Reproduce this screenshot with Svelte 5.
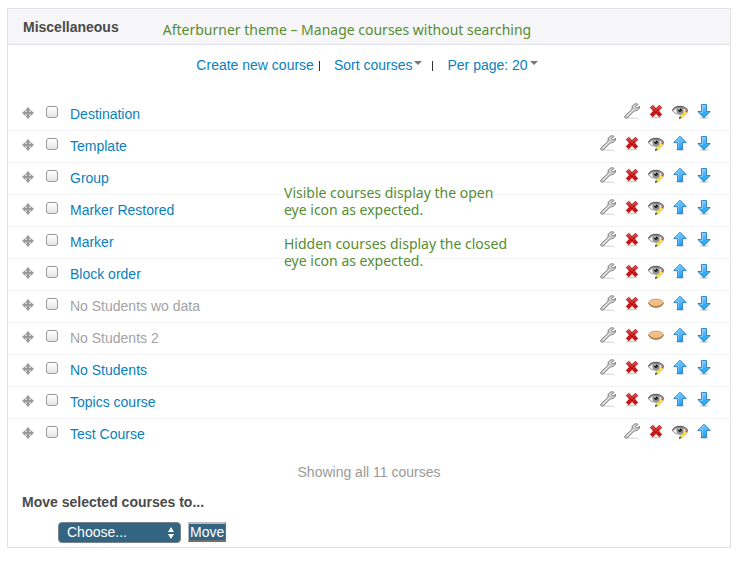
<script>
  const courses = [
    { name: 'Destination', visible: true },
    { name: 'Template', visible: true },
    { name: 'Group', visible: true },
    { name: 'Marker Restored', visible: true },
    { name: 'Marker', visible: true },
    { name: 'Block order', visible: true },
    { name: 'No Students wo data', visible: false },
    { name: 'No Students 2', visible: false },
    { name: 'No Students', visible: true },
    { name: 'Topics course', visible: true },
    { name: 'Test Course', visible: true }
  ];
</script>

<svg class="defs" aria-hidden="true">
  <defs>
    <linearGradient id="blue" x1="0" y1="0" x2="0" y2="1">
      <stop offset="0" stop-color="#7cc8f8" />
      <stop offset="1" stop-color="#18a0fa" />
    </linearGradient>
    <linearGradient id="red" x1="0" y1="0" x2="0" y2="1">
      <stop offset="0" stop-color="#e86058" />
      <stop offset="0.5" stop-color="#c81818" />
      <stop offset="1" stop-color="#d01010" />
    </linearGradient>
    <linearGradient id="skin" x1="0" y1="0" x2="0" y2="1">
      <stop offset="0" stop-color="#efc592" />
      <stop offset="1" stop-color="#f3b778" />
    </linearGradient>
  </defs>
</svg>

{#snippet wrench()}
  <svg viewBox="0 0 16 16">
    <ellipse cx="9" cy="15.2" rx="6.5" ry="0.7" fill="#000" opacity="0.13" />
    <path d="M.9 13 8.2 6.2C7.4 3.3 9.6.6 12.6.7L13.8 1.2 11.6 3.5 12.5 4.9 14 4.7 15.5 3C16 6 13.6 8.2 10.4 7.8L3.3 15C1.8 15.8.2 14.6.9 13Z" fill="#cecece" stroke="#7d7d7d" stroke-width="1" />
    <path d="M2.2 13.7 9.6 6.5" stroke="#f0f0f0" stroke-width="0.8" />
  </svg>
{/snippet}

{#snippet cross()}
  <svg viewBox="0 0 16 16">
    <ellipse cx="8" cy="14.4" rx="5.5" ry="0.8" fill="#000" opacity="0.2" />
    <path d="M2.3 4.6 4.7 2.3 8 5.6 11.3 2.3 13.7 4.6 10.5 8 13.7 11.4 11.3 13.7 8 10.4 4.7 13.7 2.3 11.4 5.5 8Z" fill="url(#red)" stroke="#b31212" stroke-width="0.9" stroke-linejoin="round" />
  </svg>
{/snippet}

{#snippet openEye()}
  <svg viewBox="0 0 16 16">
    <path d="M.6 7.8C3.4 3.6 12 3.2 15.4 8 12 12.4 4 12.4.6 7.8Z" fill="#f4f4f4" stroke="#777" stroke-width="0.8" />
    <path d="M.4 7.4C3.5 1.8 12.6 2 15.6 7.6" fill="none" stroke="#4c4c4c" stroke-width="1.1" />
    <circle cx="8" cy="7.3" r="3.3" fill="#999" stroke="#666" stroke-width="0.6" />
    <circle cx="8" cy="7.2" r="1.8" fill="#181818" />
    <circle cx="7" cy="6" r="0.8" fill="#fff" />
    <path d="M7.5 15.3 8.3 12.9 13.4 7.8 15.2 9.6 10.1 14.6Z" fill="#fbe550" stroke="#a68a2a" stroke-width="0.5" />
    <path d="M13.2 8 14.3 7 15.9 8.6 15 9.7Z" fill="#e0523c" />
    <path d="M7 15.9 7.8 13.6 9.4 15.1Z" fill="#222" />
  </svg>
{/snippet}

{#snippet closedEye()}
  <svg viewBox="0 0 16 16">
    <path d="M1.5 9.5C5 13.9 11 13.9 14.5 9.5" fill="none" stroke="#000" stroke-width="1.2" opacity="0.25" />
    <ellipse cx="8" cy="8" rx="7.4" ry="3.9" fill="url(#skin)" stroke="#c1905b" stroke-width="0.8" />
    <path d="M.6 8.2C3.6 13 12.4 13 15.4 8.2" fill="none" stroke="#8c6540" stroke-width="0.9" />
  </svg>
{/snippet}

{#snippet up()}
  <svg viewBox="0 0 16 16">
    <ellipse cx="8" cy="15" rx="4.5" ry="0.8" fill="#000" opacity="0.22" />
    <path d="M8 1.2 14.2 7.5H10.5V14.5H5.5V7.5H1.8Z" fill="url(#blue)" stroke="#2f86c8" stroke-width="1" stroke-linejoin="round" />
    <path d="M6.4 13.6V6.7H4.1L8 2.6" fill="none" stroke="#a9ddfb" stroke-width="0.6" />
  </svg>
{/snippet}

{#snippet down()}
  <svg viewBox="0 0 16 16">
    <ellipse cx="8" cy="15" rx="4.5" ry="0.8" fill="#000" opacity="0.22" />
    <path d="M8 14.7 1.8 8.5H5.5V1.5H10.5V8.5H14.2Z" fill="url(#blue)" stroke="#2f86c8" stroke-width="1" stroke-linejoin="round" />
    <path d="M9.6 2.4H6.4V9.4H4.2" fill="none" stroke="#a9ddfb" stroke-width="0.6" />
  </svg>
{/snippet}

<main>
  <section class="panel">
    <header>
      <h3>Miscellaneous</h3>
      <p class="note">Afterburner theme – Manage courses without searching</p>
    </header>

    <nav>
      <a href="#new">Create new course</a>
      <span class="bar first"></span>
      <a href="#sort">Sort courses<i class="caret"></i></a>
      <span class="bar"></span>
      <a href="#page">Per page: 20<i class="caret"></i></a>
    </nav>

    <div class="listing">
      <ul>
        {#each courses as course, i}
          <li class:dimmed={!course.visible}>
            <svg class="drag" viewBox="0 0 12 12">
              <path d="M6 0 9 3.4H7.2V4.8H8.6V3L12 6 8.6 9V7.2H7.2V8.6H9L6 12 3 8.6H4.8V7.2H3.4V9L0 6 3.4 3V4.8H4.8V3.4H3Z" fill="#999" />
            </svg>
            <input type="checkbox" id="course-{i}" aria-label="Select {course.name}" />
            <a class="name" href="#course-{i}">{course.name}</a>
            <div class="actions">
              <a href="#edit" aria-label="Edit">{@render wrench()}</a>
              <a href="#delete" aria-label="Delete">{@render cross()}</a>
              {#if course.visible}
                <a href="#hide" aria-label="Hide">{@render openEye()}</a>
              {:else}
                <a href="#show" aria-label="Show">{@render closedEye()}</a>
              {/if}
              {#if i > 0}
                <a href="#up" aria-label="Move up">{@render up()}</a>
              {/if}
              {#if i < courses.length - 1}
                <a href="#down" aria-label="Move down">{@render down()}</a>
              {/if}
            </div>
          </li>
        {/each}
      </ul>
      <div class="note callout">
        <p>Visible courses display the open eye icon as expected.</p>
        <p>Hidden courses display the closed eye icon as expected.</p>
      </div>
    </div>

    <p class="total">Showing all 11 courses</p>

    <form onsubmit={(e) => e.preventDefault()}>
      <label for="target">Move selected courses to...</label>
      <div class="controls">
        <div class="select">
          <select id="target">
            <option>Choose...</option>
            <option>Miscellaneous</option>
          </select>
          <svg viewBox="0 0 6 12"><path d="M3 0 6 5H0ZM3 12 0 7H6Z" fill="#fff" /></svg>
        </div>
        <button type="submit">Move</button>
      </div>
    </form>
  </section>
</main>

<style>
  :global(body) {
    margin: 0;
    background: #fff;
  }
  main {
    padding: 8px 14px 16px 7px;
    font: 14px/20px "Liberation Sans", Arial, sans-serif;
    color: #4a4a4a;
  }
  .defs {
    position: absolute;
    width: 0;
    height: 0;
  }
  h3, p, ul {
    margin: 0;
    padding: 0;
  }
  a {
    color: #0a7fbd;
    text-decoration: none;
  }
  .panel {
    border: 1px solid #e0e0e6;
  }
  header {
    display: flex;
    align-items: center;
    gap: 44px;
    height: 35px;
    padding: 0 15px;
    background: #f6f6f9;
    border-bottom: 1px solid #e0e0e6;
  }
  h3 {
    font-size: 14px;
    line-height: 20px;
  }
  .note {
    font-family: "Noto Sans", "Open Sans", sans-serif;
    font-size: 14px;
    line-height: 17px;
    color: #568c32;
  }
  header .note {
    padding-top: 6px;
  }
  nav {
    display: flex;
    justify-content: center;
    align-items: center;
    padding: 10px 4px 24px 0;
  }
  .bar {
    width: 1px;
    height: 10px;
    margin: 2px 14px 0 10px;
    background: #333;
  }
  .bar.first {
    margin: 2px 14px 0 5px;
  }
  .caret {
    display: inline-block;
    margin-left: 2px;
    vertical-align: 5px;
    border: 4px solid transparent;
    border-top-color: #777;
    border-bottom: 0;
  }
  .listing {
    position: relative;
  }
  ul {
    list-style: none;
  }
  li {
    display: flex;
    align-items: center;
    box-sizing: border-box;
    height: 32px;
    padding: 0 18px 4px 14px;
    border-bottom: 1px solid #f4f4f4;
  }
  li:last-child {
    border-bottom-color: transparent;
  }
  .drag {
    width: 12px;
    height: 12px;
    margin-right: 12px;
  }
  input {
    appearance: none;
    box-sizing: border-box;
    width: 12px;
    height: 12px;
    margin: 0 12px 2px 0;
    border: 1px solid #999;
    border-radius: 3px;
    background: linear-gradient(#fff, #e6e6e6);
  }
  .name {
    flex: 1;
    padding-top: 2px;
  }
  .dimmed .name {
    color: #a3a3a3;
  }
  .actions {
    display: flex;
    gap: 8px;
    padding-bottom: 4px;
  }
  .actions a,
  .actions svg {
    display: block;
    width: 16px;
    height: 16px;
  }
  .callout {
    position: absolute;
    top: 85px;
    left: 276px;
    width: 234px;
  }
  .callout p + p {
    margin-top: 17px;
  }
  .total {
    padding-top: 11px;
    text-align: center;
    color: #999;
  }
  form {
    padding: 10px 14px 4px;
  }
  label {
    display: block;
    font-weight: bold;
  }
  .controls {
    display: flex;
    gap: 7px;
    padding: 10px 0 0 36px;
  }
  .select {
    position: relative;
  }
  select {
    appearance: none;
    display: block;
    box-sizing: border-box;
    width: 123px;
    height: 21px;
    padding: 0 8px;
    border: 1px solid #76848e;
    border-radius: 4px;
    background: #336482;
    color: #fff;
    font: inherit;
    line-height: 19px;
  }
  .select svg {
    position: absolute;
    top: 5px;
    right: 7px;
    width: 6px;
    height: 12px;
    pointer-events: none;
  }
  button {
    box-sizing: border-box;
    height: 20px;
    padding: 0 1px;
    border: 1px solid;
    border-width: 2px 1px;
    border-color: #bbb #6f6f6f #6f6f6f #bbb;
    background: #336482;
    color: #fff;
    font: inherit;
    line-height: 16px;
  }
</style>
